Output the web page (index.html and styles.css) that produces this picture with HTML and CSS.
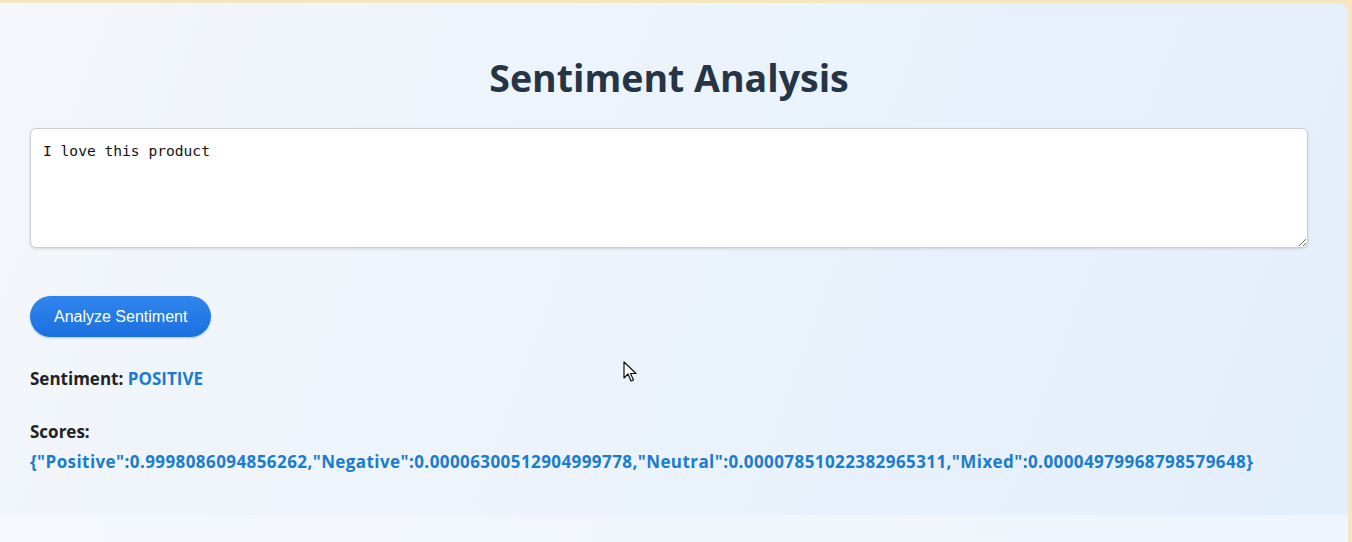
FILE: index.html
```html
<!DOCTYPE html>
<html>
<head>
<meta charset="utf-8">
<link rel="stylesheet" href="styles.css">
</head>
<body>
<div class="app">
  <h1 class="title">Sentiment Analysis</h1>
  <textarea class="input">I love this product</textarea>
  <button class="btn">Analyze Sentiment</button>
  <p class="line"><span class="label">Sentiment:</span> <span class="value">POSITIVE</span></p>
  <div class="scores">
    <div class="label">Scores:</div>
    <div class="value json">{"Positive":0.9998086094856262,"Negative":0.00006300512904999778,"Neutral":0.00007851022382965311,"Mixed":0.00004979968798579648}</div>
  </div>
  <svg class="cursor" width="14" height="22" viewBox="0 0 14 22"><path d="M1 1 L1 17 L5 13 L8 20 L10.5 19 L7.5 12.5 L13 12.5 Z" fill="#fff" stroke="#111" stroke-width="1.2" stroke-linejoin="round"/></svg>
</div>
<div class="below"></div>
</body>
</html>
```
FILE: styles.css
```css
html, body { margin: 0; padding: 0; }
body {
  background: #f6e6bf;
  height: 542px;
  overflow: hidden;
  font-family: "Open Sans", "Noto Sans", sans-serif;
}
.app {
  position: relative;
  margin: 3px 4px 0 0;
  height: 512px;
  box-sizing: border-box;
  padding: 50px 40px 0 30px;
  border-top-right-radius: 9px;
  background: linear-gradient(110deg, #f4f7fb 0%, #ecf3fb 45%, #e3effb 100%);
  display: flex;
  flex-direction: column;
  align-items: flex-start;
}
.below {
  height: 27px;
  margin-right: 4px;
  background: linear-gradient(90deg, #f5f8fc, #eef5fc);
}
.title {
  align-self: stretch;
  text-align: center;
  margin: 0 0 25px 0;
  font-size: 37.5px;
  line-height: 50px;
  font-weight: 700;
  color: #253546;
}
.input {
  align-self: stretch;
  box-sizing: border-box;
  height: 120px;
  margin: 0;
  padding: 13px 12px;
  border: 1px solid #c9ccd1;
  border-radius: 6px;
  background: #fff;
  box-shadow: 0 1px 3px rgba(0,0,0,0.12);
  font-family: "DejaVu Sans Mono", monospace;
  font-size: 14.6px;
  line-height: 17px;
  color: #111;
  resize: vertical;
}
.btn {
  margin-top: 48px;
  height: 41px;
  padding: 0 24px;
  border: none;
  border-radius: 21px;
  background: linear-gradient(180deg, #2f86ec 0%, #1c70df 100%);
  box-shadow: 0 1px 2px rgba(0,60,140,0.25);
  color: #fff;
  font-family: "Liberation Sans", Arial, sans-serif;
  font-size: 16px;
}
.line {
  margin: 30px 0 0;
  font-size: 17px;
  line-height: 24px;
  font-weight: 700;
}
.label { color: #222; }
.value { color: #1a7ccf; }
.scores {
  margin-top: 26px;
  font-size: 17px;
  line-height: 30px;
  font-weight: 700;
}
.json { letter-spacing: 0.42px; }
.cursor {
  position: absolute;
  left: 623px;
  top: 358px;
}
```
